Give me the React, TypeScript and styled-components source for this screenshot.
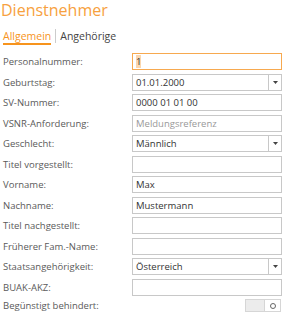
import React from "react";
import styled, { createGlobalStyle } from "styled-components";

const Global = createGlobalStyle`
  html, body { margin: 0; padding: 0; background: #fff; }
  body { font-family: "Open Sans", "Noto Sans", sans-serif; }
`;

const Page = styled.div`
  width: 283px;
  height: 316px;
  overflow: hidden;
  padding: 0 1px 0 3px;
  box-sizing: border-box;
`;

const Title = styled.h1`
  margin: -1px 0 0 -2px;
  font-weight: 400;
  font-size: 16px;
  line-height: 22px;
  color: #f7a13e;
`;

const Tabs = styled.div`
  display: flex;
  align-items: stretch;
  margin-top: 5px;
  height: 19px;
`;

const Tab = styled.div<{ $active?: boolean }>`
  font-size: 10.5px;
  line-height: 14px;
  padding-top: 3px;
  color: ${(p) => (p.$active ? "#f7941d" : "#444")};
  border-bottom: 2px solid ${(p) => (p.$active ? "#f7941d" : "transparent")};
`;

const TabSep = styled.div`
  width: 1px;
  height: 14px;
  margin: 3px 4px 0 4px;
  background: #ccc;
`;

const Form = styled.div`
  display: flex;
  flex-direction: column;
  gap: 3.5px;
  margin-top: 8px;
`;

const Row = styled.div<{ $compact?: boolean }>`
  display: grid;
  grid-template-columns: 129px 1fr;
  align-items: center;
  height: ${(p) => (p.$compact ? "13px" : "17px")};
`;

const Label = styled.label`
  font-size: 9.5px;
  color: #5a5a5a;
  white-space: nowrap;
`;

const Box = styled.div<{ $focus?: boolean }>`
  display: flex;
  align-items: center;
  height: 17px;
  box-sizing: border-box;
  border: 1px solid ${(p) => (p.$focus ? "#f7a94f" : "#c8c8c8")};
  background: #fff;
`;

const Value = styled.span<{ $placeholder?: boolean }>`
  flex: 1;
  padding-left: 3px;
  font-size: 9.5px;
  color: ${(p) => (p.$placeholder ? "#999" : "#333")};
`;

const Selected = styled.span`
  background: #fbd7ae;
`;

const Arrow = styled.div`
  width: 12px;
  height: 100%;
  border-left: 1px solid #c8c8c8;
  display: flex;
  align-items: center;
  justify-content: center;
`;

const ToggleWrap = styled.div`
  display: flex;
  justify-content: flex-end;
  padding-right: 1px;
`;

const Toggle = styled.div`
  display: flex;
  width: 36px;
  height: 13px;
  border: 1px solid #d6d6d6;
  box-sizing: border-box;
`;

const ToggleOff = styled.div`
  flex: 1;
  background: #ececec;
`;

const ToggleKnob = styled.div`
  width: 15px;
  display: flex;
  align-items: center;
  justify-content: center;
  background: #fff;
  border-left: 1px solid #d6d6d6;
`;

const Knob = styled.div`
  width: 4px;
  height: 4px;
  border-radius: 50%;
  border: 1px solid #666;
`;

const Caret = () => (
  <svg width="5" height="3" viewBox="0 0 5 3">
    <path d="M0 0h5L2.5 3z" fill="#444" />
  </svg>
);

type Field = {
  label: string;
  value?: string;
  placeholder?: string;
  select?: boolean;
};

const fields: Field[] = [
  { label: "Geburtstag:", value: "01.01.2000", select: true },
  { label: "SV-Nummer:", value: "0000 01 01 00" },
  { label: "VSNR-Anforderung:", placeholder: "Meldungsreferenz" },
  { label: "Geschlecht:", value: "Männlich", select: true },
  { label: "Titel vorgestellt:" },
  { label: "Vorname:", value: "Max" },
  { label: "Nachname:", value: "Mustermann" },
  { label: "Titel nachgestellt:" },
  { label: "Früherer Fam.-Name:" },
  { label: "Staatsangehörigkeit:", value: "Österreich", select: true },
  { label: "BUAK-AKZ:" },
];

export default function App() {
  return (
    <>
      <Global />
      <Page>
        <Title>Dienstnehmer</Title>
        <Tabs>
          <Tab $active>Allgemein</Tab>
          <TabSep />
          <Tab>Angehörige</Tab>
        </Tabs>
        <Form>
          <Row>
            <Label>Personalnummer:</Label>
            <Box $focus>
              <Value>
                <Selected>1</Selected>
              </Value>
            </Box>
          </Row>
          {fields.map((f) => (
            <Row key={f.label}>
              <Label>{f.label}</Label>
              <Box>
                <Value $placeholder={!!f.placeholder}>
                  {f.value ?? f.placeholder ?? ""}
                </Value>
                {f.select && (
                  <Arrow>
                    <Caret />
                  </Arrow>
                )}
              </Box>
            </Row>
          ))}
          <Row $compact>
            <Label>Begünstigt behindert:</Label>
            <ToggleWrap>
              <Toggle>
                <ToggleOff />
                <ToggleKnob>
                  <Knob />
                </ToggleKnob>
              </Toggle>
            </ToggleWrap>
          </Row>
        </Form>
      </Page>
    </>
  );
}
